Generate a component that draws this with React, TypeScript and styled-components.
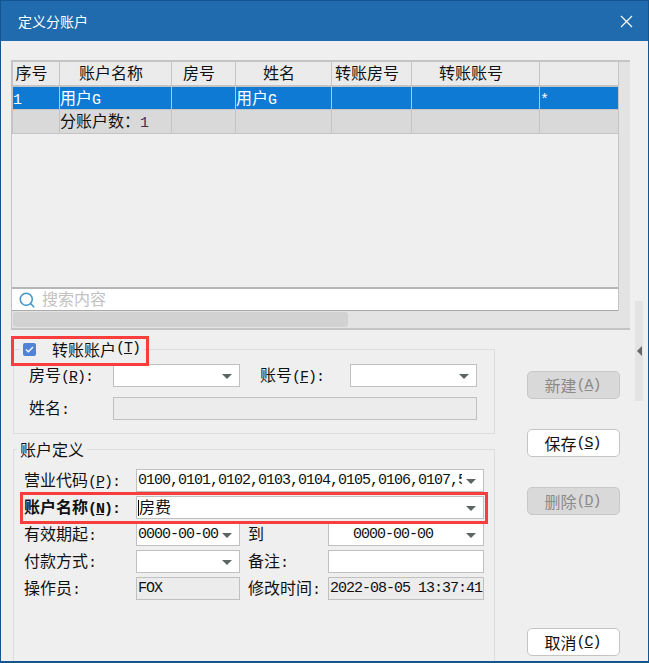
import React from 'react';
import styled, { createGlobalStyle } from 'styled-components';
import { Search } from 'lucide-react';

const Global = createGlobalStyle`
  html, body { margin: 0; padding: 0; background: #efefef; }
  * { box-sizing: border-box; }
  body { font-family: "Noto Sans CJK SC", "Liberation Sans", sans-serif; font-size: 16px; color: #000; }
`;

const Win = styled.div`
  width: 649px; height: 663px; display: flex; flex-direction: column; overflow: hidden;
  border: 1px solid #14558f; border-bottom-width: 2px; background: #efefef;
`;
const TitleBar = styled.div`
  height: 40px; flex: none; background: #206aae; color: #fff; display: flex; align-items: center;
  justify-content: space-between; padding: 0 15px 0 17px; font-size: 14px;
`;
const CloseIcon = styled.svg`
  width: 13px; height: 13px; display: block;
`;
const Body = styled.div`
  flex: 1; min-height: 0; display: flex; padding: 19px 0 0 10px;
`;
const Main = styled.div`
  width: 619px; flex: none; display: flex; flex-direction: column;
`;
const Strip = styled.div`
  width: 8px; height: 100px; flex: none; margin: 241px 0 0 5px; background: #e3e3e3;
  display: flex; align-items: center; justify-content: center;
`;
const StripArrow = styled.span`
  width: 0; height: 0; border-style: solid; border-width: 5px 5px 5px 0;
  border-color: transparent #666 transparent transparent;
`;
const Panel = styled.div`
  flex: none; border-top: 2px solid #c4c4c4; border-bottom: 2px solid #c4c4c4; border-left: 1px solid #c4c4c4;
`;
const Upper = styled.div`
  display: flex; height: 249px;
`;
const GridCol = styled.div`
  width: 607px; flex: none; display: flex; flex-direction: column; border-right: 1px solid #c4c4c4;
`;
const VScroll = styled.div`
  flex: 1; background: #e3e3e3;
`;
const Grid = styled.div`
  display: grid; grid-template-columns: 47px 112px 64px 96px 80px 128px 1fr;
  grid-template-rows: 25px 23px 24px; border-left: 1px solid #c4c4c4; flex: none;
`;
const Cell = styled.div<{ $kind: 'head' | 'sel' | 'sum'; $last?: boolean }>`
  border-right: ${p => (p.$last ? 'none' : '1px solid #c4c4c4')};
  border-bottom: ${p => (p.$kind === 'head' ? '2px' : '1px')} solid #c4c4c4;
  background: ${p => (p.$kind === 'head' ? '#ebebeb' : p.$kind === 'sel' ? '#0f7ad4' : '#d9d9d9')};
  color: ${p => (p.$kind === 'sel' ? '#fff' : '#111')};
  text-align: ${p => (p.$kind === 'head' ? 'center' : 'left')};
  padding-right: ${p => (p.$kind === 'head' ? '9px' : '0')};
  line-height: 21px; white-space: nowrap;
`;
const Spacer = styled.div`
  flex: 1;
`;
const SearchBar = styled.div`
  height: 24px; flex: none; background: #fff; border-top: 2px solid #b5b5b5; border-bottom: 1px solid #aaa;
  display: flex; align-items: center; padding-left: 6px; gap: 6px; color: #c2c2c2;
  svg { color: #3f96c8; flex: none; }
`;
const SearchHint = styled.span`
  padding-bottom: 3px;
`;
const HScroll = styled.div`
  height: 17px; background: #e3e3e3; padding: 1px 0 1px 1px;
`;
const Thumb = styled.div`
  width: 335px; height: 15px; background: #d2d2d2; border-radius: 3px;
`;
const Lower = styled.div`
  flex: 1; min-height: 0; display: flex; margin-top: 8px; padding-left: 2px;
`;
const Forms = styled.div`
  width: 482px; flex: none; display: flex; flex-direction: column; gap: 4px;
`;
const Group = styled.fieldset<{ $grow?: boolean }>`
  margin: 0; padding: 0; min-inline-size: 0; border: 1px solid #dcdcdc; position: relative;
  ${p => (p.$grow ? 'flex: 1; margin-bottom: -20px;' : '')}
`;
const Legend = styled.legend<{ $offset: number }>`
  margin-left: ${p => p.$offset}px; padding: 0 3px; height: 22px; line-height: 22px; display: flex;
  align-items: center; position: relative; color: #111;
`;
const Check = styled.span`
  width: 13px; height: 13px; background: #4f83d8; border-radius: 2px; display: flex;
  align-items: center; justify-content: center; margin-right: 16px;
`;
const RedBox = styled.div<{ $t: number; $r: number; $b: number; $l: number }>`
  position: absolute; top: ${p => p.$t}px; right: ${p => p.$r}px; bottom: ${p => p.$b}px; left: ${p => p.$l}px;
  border: 3px solid #f93c3c; z-index: 2; pointer-events: none;
`;
const Rows = styled.div<{ $pad: string; $gap: number }>`
  padding: ${p => p.$pad}; display: flex; flex-direction: column; gap: ${p => p.$gap}px;
`;
const Row = styled.div`
  display: flex; align-items: center; height: 23px; position: relative;
`;
const Label = styled.div<{ $w: number; $ml?: number; $bold?: boolean }>`
  width: ${p => p.$w}px; flex: none; margin-left: ${p => p.$ml ?? 0}px; white-space: nowrap; color: #111;
  font-weight: ${p => (p.$bold ? 700 : 400)}; padding-bottom: 4px;
`;
const Field = styled.div<{ $w?: number; $off?: boolean }>`
  ${p => (p.$w ? `width: ${p.$w}px; flex: none;` : 'flex: 1; min-width: 0;')}
  height: 23px; border: 1px solid #c0c0c0; background: ${p => (p.$off ? '#ececec' : '#fff')};
  display: flex; align-items: center; padding-left: 1px; color: #111;
`;
const FieldText = styled.div<{ $center?: boolean; $clip?: boolean }>`
  flex: 1; min-width: 0; white-space: nowrap; display: flex; align-items: center;
  overflow-x: ${p => (p.$clip ? 'clip' : 'visible')};
  justify-content: ${p => (p.$center ? 'center' : 'flex-start')};
  padding-right: ${p => (p.$center ? '6px' : '0')};
`;
const Caret = styled.span`
  width: 1px; height: 16px; background: #000; flex: none;
`;
const NameText = styled.span`
  padding-bottom: 4px;
`;
const Arrow = styled.span`
  flex: none; width: 0; height: 0; margin: 1px 7px 0 4px; border-style: solid; border-width: 5px 5px 0 5px;
  border-color: #5c6660 transparent transparent transparent;
`;
const Latin = styled.span<{ $tint?: string }>`
  font-family: "Liberation Mono", monospace; font-size: 15px; letter-spacing: -1px;
  color: ${p => p.$tint ?? 'inherit'}; white-space: pre;
`;
const Buttons = styled.div`
  width: 93px; flex: none; margin-left: 32px; padding: 33px 0 5px; display: flex; flex-direction: column; gap: 30px;
`;
const Btn = styled.div<{ $off?: boolean; $end?: boolean }>`
  height: 28px; flex: none; border-radius: 5px; border: 1px solid ${p => (p.$off ? '#c8c8c8' : '#c4c4c4')};
  background: ${p => (p.$off ? '#d9d9d9' : '#fff')}; color: ${p => (p.$off ? '#8a8a8a' : '#111')};
  display: flex; align-items: center; justify-content: center; white-space: nowrap; padding-right: 2px;
  ${p => (p.$end ? 'margin-top: auto;' : '')}
`;

const heads = ['序号', '账户名称', '房号', '姓名', '转账房号', '转账账号', ''];
const Key = ({ k, tail = '' }: { k: string; tail?: string }) => (
  <Latin>(<u>{k}</u>){tail}</Latin>
);

export default function App() {
  return (
    <Win>
      <Global />
      <TitleBar>
        <span>定义分账户</span>
        <CloseIcon viewBox="0 0 13 13" fill="none" stroke="#fff" strokeWidth="1.2">
          <path d="M1 1l11 11M12 1L1 12" />
        </CloseIcon>
      </TitleBar>
      <Body>
        <Main>
          <Panel>
            <Upper>
              <GridCol>
                <Grid>
                  {heads.map((h, i) => (
                    <Cell key={i} $kind="head" $last={i === 6}>{h}</Cell>
                  ))}
                  <Cell $kind="sel"><Latin>1</Latin></Cell>
                  <Cell $kind="sel">用户<Latin>G</Latin></Cell>
                  <Cell $kind="sel" />
                  <Cell $kind="sel">用户<Latin>G</Latin></Cell>
                  <Cell $kind="sel" />
                  <Cell $kind="sel" />
                  <Cell $kind="sel" $last><Latin>*</Latin></Cell>
                  <Cell $kind="sum" />
                  <Cell $kind="sum">分账户数：<Latin $tint="#4a2a5a">1</Latin></Cell>
                  <Cell $kind="sum" />
                  <Cell $kind="sum" />
                  <Cell $kind="sum" />
                  <Cell $kind="sum" />
                  <Cell $kind="sum" $last />
                </Grid>
                <Spacer />
                <SearchBar>
                  <Search size={18} strokeWidth={2} />
                  <SearchHint>搜索内容</SearchHint>
                </SearchBar>
              </GridCol>
              <VScroll />
            </Upper>
            <HScroll><Thumb /></HScroll>
          </Panel>
          <Lower>
            <Forms>
              <Group>
                <Legend $offset={6}>
                  <Check>
                    <svg width="9" height="7" viewBox="0 0 9 7" fill="none" stroke="#fff" strokeWidth="1.3">
                      <path d="M1 3.5l2.4 2.3L8 1" />
                    </svg>
                  </Check>
                  转账账户<Key k="T" />
                  <RedBox $t={-2} $r={-6} $b={-6} $l={-9} />
                </Legend>
                <Rows $pad="4px 17px 13px 15px" $gap={10}>
                  <Row>
                    <Label $w={84}>房号<Key k="R" tail=":" /></Label>
                    <Field $w={127}><FieldText /><Arrow /></Field>
                    <Label $w={90} $ml={20}>账号<Key k="F" tail=":" /></Label>
                    <Field $w={127}><FieldText /><Arrow /></Field>
                  </Row>
                  <Row>
                    <Label $w={84}>姓名<Latin>:</Latin></Label>
                    <Field $off />
                  </Row>
                </Rows>
              </Group>
              <Group $grow>
                <Legend $offset={3}>账户定义</Legend>
                <Rows $pad="9px 10px 0 10px" $gap={4}>
                  <Row>
                    <Label $w={112}>营业代码<Key k="P" tail=":" /></Label>
                    <Field>
                      <FieldText $clip><Latin>0100,0101,0102,0103,0104,0105,0106,0107,5</Latin></FieldText>
                      <Arrow />
                    </Field>
                  </Row>
                  <Row>
                    <Label $w={112} $bold>账户名称<Key k="N" tail=":" /></Label>
                    <Field>
                      <FieldText><Caret /><NameText>房费</NameText></FieldText>
                      <Arrow />
                    </Field>
                    <RedBox $t={-4} $r={-4} $b={-5} $l={-4} />
                  </Row>
                  <Row>
                    <Label $w={112}>有效期起<Latin>:</Latin></Label>
                    <Field $w={104}><FieldText><Latin>0000-00-00</Latin></FieldText><Arrow /></Field>
                    <Label $w={80} $ml={8}>到</Label>
                    <Field $w={156}><FieldText $center><Latin>0000-00-00</Latin></FieldText><Arrow /></Field>
                  </Row>
                  <Row>
                    <Label $w={112}>付款方式<Latin>:</Latin></Label>
                    <Field $w={104}><FieldText /><Arrow /></Field>
                    <Label $w={80} $ml={8}>备注<Latin>:</Latin></Label>
                    <Field $w={156} />
                  </Row>
                  <Row>
                    <Label $w={112}>操作员<Latin>:</Latin></Label>
                    <Field $w={104} $off><Latin>FOX</Latin></Field>
                    <Label $w={80} $ml={8}>修改时间<Latin>:</Latin></Label>
                    <Field $w={156} $off><Latin>2022-08-05 13:37:41</Latin></Field>
                  </Row>
                </Rows>
              </Group>
            </Forms>
            <Buttons>
              <Btn $off>新建<Key k="A" /></Btn>
              <Btn>保存<Key k="S" /></Btn>
              <Btn $off>删除<Key k="D" /></Btn>
              <Btn $end>取消<Key k="C" /></Btn>
            </Buttons>
          </Lower>
        </Main>
        <Strip><StripArrow /></Strip>
      </Body>
    </Win>
  );
}
